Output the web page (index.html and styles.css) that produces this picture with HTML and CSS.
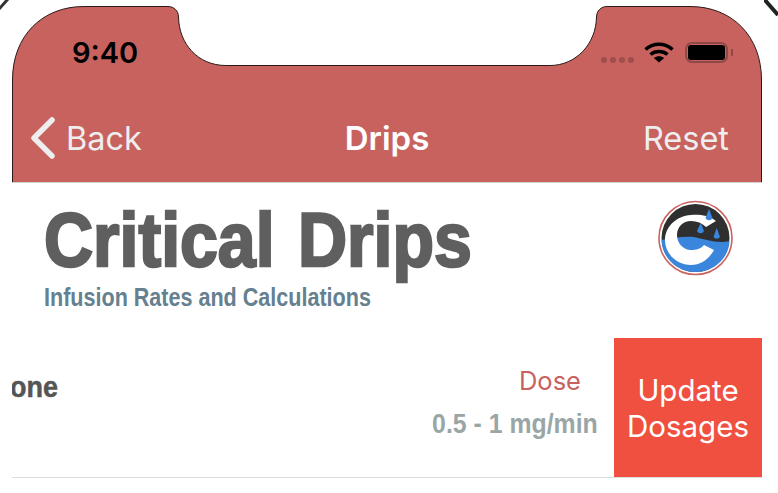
FILE: index.html
```html
<!DOCTYPE html>
<html lang="en">
<head>
    <meta charset="UTF-8">
    <title>Critical Drips</title>
    <link rel="stylesheet" href="styles.css">
</head>
<body>
    <svg class="corner corner-left" width="10" height="10" viewBox="0 0 10 10">
        <path d="M-1 9L8 -1" stroke="#333" stroke-width="3"/>
    </svg>
    <svg class="corner corner-right" width="14" height="18" viewBox="0 0 14 18">
        <path d="M0 -1L14 15" stroke="#222" stroke-width="4"/>
    </svg>
    <div class="phone">
        <header class="top">
            <svg class="top-bg" width="750" height="177" viewBox="0 0 750 177">
                <path d="M0.5 177V74C0.5 30 30 0.5 72 0.5H156C162 0.5 166.500 5 166.500 11C167 38 186 59.500 214 59.500H538C564 59.500 584 38 584.500 11C584.500 5 589 0.500 595 0.500H678C720 0.500 749.500 30 749.500 74V177Z" fill="#c8625f" stroke="#2b1a1a" stroke-width="1"/>
                <path d="M0 176.500H750" stroke="#cfcfcf" stroke-width="1"/>
            </svg>
            <div class="status">
                <span class="time">9:40</span>
                <div class="status-icons">
                    <span class="dots"><i></i><i></i><i></i><i></i></span>
                    <svg width="30" height="22" viewBox="0 0 30 22">
                        <path d="M1.500 8.500C9 1.500 21 1.500 28.500 8.500" fill="none" stroke="#000" stroke-width="3.400"/>
                        <path d="M6.500 13.500C11 9.500 19 9.500 23.500 13.500" fill="none" stroke="#000" stroke-width="3.400"/>
                        <path d="M15 21.500L9.800 17C13 14.500 17 14.500 20.200 17Z" fill="#000"/>
                    </svg>
                    <span class="battery"><b></b></span>
                    <span class="battery-cap"></span>
                </div>
            </div>
            <nav class="nav">
                <span class="back">
                    <svg width="28" height="44" viewBox="0 0 28 44">
                        <path d="M23 4L5 22L23 40" fill="none" stroke="#eeeeee" stroke-width="5.500" stroke-linecap="round" stroke-linejoin="round"/>
                    </svg>
                    Back
                </span>
                <span class="nav-title">Drips</span>
                <span class="reset">Reset</span>
            </nav>
        </header>

        <section class="brand">
            <div class="brand-text">
                <h1>Critical Drips</h1>
                <p>Infusion Rates and Calculations</p>
            </div>
            <svg class="logo" width="75" height="76" viewBox="0 0 75 76">
                <circle cx="37.500" cy="38" r="36.500" fill="#fff" stroke="#c8625f" stroke-width="1.600"/>
                <circle cx="37.500" cy="38" r="34" fill="#2f2f2f"/>
                <path d="M3.500 40C14 38 26 36 36 37C46 39 60 44 71.500 41C71 58 56 72 37.500 72C19 72 4 58 3.500 40Z" fill="#3a86dc"/>
                <path d="M58 21C50 15 42 14.500 33 15C18 16 7 27 7 40C7 54 19 65 33 65C43 65 51 59 56 50L46 45C43 49 38 50 33 50C25 50 19 43 19 35C19 27 25 21 33 21C39 21 44 23 48 27Z" fill="#fff"/>
                <path d="M51 9L54.500 18A3.800 3.800 0 0 1 47.500 18Z" fill="#3a86dc"/>
                <path d="M42.700 23L46 31A3.800 3.800 0 0 1 39 31Z" fill="#3a86dc"/>
                <path d="M58.700 28L62 37A3.800 3.800 0 0 1 55.500 37Z" fill="#3a86dc"/>
            </svg>
        </section>

        <section class="row">
            <div class="drug"><span>one</span></div>
            <div class="dose">
                <span class="dose-label">Dose</span>
                <span class="dose-value">0.5 - 1 mg/min</span>
            </div>
            <div class="update">Update Dosages</div>
        </section>
    </div>
</body>
</html>
```

FILE: styles.css
```css
html, body {
    margin: 0;
    background: #fff;
}
body {
    position: relative;
    width: 778px;
    height: 493px;
    overflow: hidden;
    font-family: Inter, "Liberation Sans", sans-serif;
}
.corner {
    position: absolute;
    top: 0;
}
.corner-left {
    left: 0;
}
.corner-right {
    right: 0;
}
.phone {
    width: 750px;
    margin-left: 12px;
    padding-top: 6px;
}
.top {
    position: relative;
    height: 177px;
}
.top-bg {
    position: absolute;
    left: 0;
    top: 0;
}
.status, .nav {
    position: relative;
}
.status {
    display: flex;
    justify-content: space-between;
    align-items: center;
    height: 92px;
    padding: 0 29px 0 60px;
    box-sizing: border-box;
}
.time {
    font-size: 29px;
    font-weight: 600;
    color: #000;
}
.status-icons {
    display: flex;
    align-items: center;
}
.dots {
    display: flex;
    gap: 3px;
    margin: 15px 10px 0 0;
}
.dots i {
    width: 6px;
    height: 6px;
    border-radius: 50%;
    background: #a04e4c;
}
.battery {
    display: block;
    width: 37px;
    height: 15px;
    margin-left: 11px;
    padding: 1px;
    border: 2px solid #8f4947;
    border-radius: 7px;
}
.battery b {
    display: block;
    height: 100%;
    background: #000;
    border-radius: 3px;
}
.battery-cap {
    width: 2px;
    height: 7px;
    margin-left: 3px;
    background: #8f4947;
}
.nav {
    display: grid;
    grid-template-columns: 1fr auto 1fr;
    align-items: center;
    height: 44px;
    margin-top: 18px;
    padding: 0 33px;
    color: #eeeeee;
    font-size: 32.500px;
}
.back {
    display: flex;
    align-items: center;
    gap: 9px;
    margin-left: -16px;
}
.nav-title {
    font-size: 33px;
    font-weight: 600;
    color: #fff;
}
.reset {
    text-align: right;
}
.brand {
    display: flex;
    justify-content: space-between;
    align-items: flex-start;
    padding: 17px 29px 0 32px;
    height: 155px;
    box-sizing: border-box;
}
/* no condensed family installed, so the bold face is squeezed */
h1, .brand p, .drug span, .dose-value {
    font-family: "Liberation Sans", sans-serif;
    font-weight: 700;
    display: block;
    white-space: nowrap;
}
h1 {
    margin: 0;
    width: 500px;
    font-size: 76px;
    line-height: 80px;
    word-spacing: 5px;
    color: #5f5f5f;
    -webkit-text-stroke: 2.500px #5f5f5f;
    transform: scaleX(.895);
    transform-origin: left;
}
.brand p {
    margin: 3px 0 0;
    width: 400px;
    font-size: 25px;
    line-height: 28px;
    color: #65808f;
    transform: scaleX(.862);
    transform-origin: left;
}
.row {
    display: flex;
    align-items: stretch;
    height: 139px;
    overflow: hidden;
    border-bottom: 1px solid #dddddd;
}
.drug {
    flex: 1;
    padding-top: 33px;
}
.drug span {
    width: 60px;
    margin-left: -2px;
    font-size: 29px;
    color: #555;
    -webkit-text-stroke: .500px #555;
    transform: scaleX(.93);
    transform-origin: left;
}
.dose {
    display: flex;
    flex-direction: column;
    align-items: flex-end;
    padding: 27px 16px 0 0;
}
.dose-label {
    padding-right: 17px;
    font-size: 25.500px;
    color: #c8625f;
}
.dose-value {
    margin-top: 12px;
    font-size: 28px;
    color: #9aa6a6;
    transform: scaleX(.887);
    transform-origin: right;
}
.update {
    display: flex;
    align-items: center;
    justify-content: center;
    width: 148px;
    background: #ef5040;
    color: #fff;
    font-size: 29.500px;
    line-height: 36px;
    text-align: center;
}
```
